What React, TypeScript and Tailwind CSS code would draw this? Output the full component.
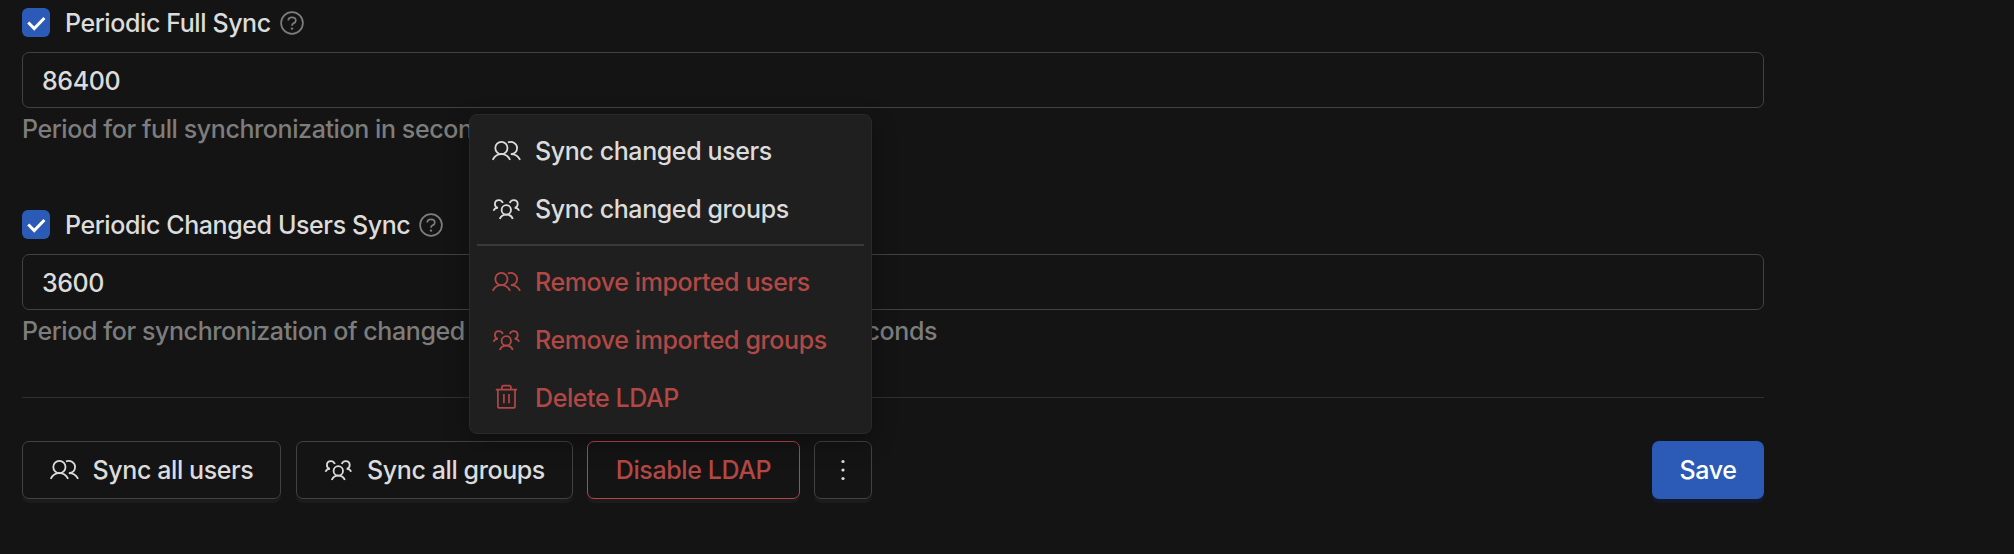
import React from "react";

function UsersIcon() {
  return (
    <svg width="30" height="28" viewBox="0 0 30 28" fill="none" stroke="currentColor" strokeWidth="1.8">
      <circle cx="9.400" cy="11" r="6.100" />
      <path d="M0.700 22.900C2.500 19.300 5.300 17.200 9.400 17.200S16.300 19.300 18.100 22.900" />
      <path d="M15.900 5.400c4.800-1.700 9.200 1.500 9.200 5.700 0 3.400-2.500 5.900-6.300 6 4.600 0 7.600 2.300 9.300 5.700" />
    </svg>
  );
}

function GroupsIcon() {
  return (
    <svg width="30" height="28" viewBox="0 0 30 28" fill="none" stroke="currentColor" strokeWidth="1.8">
      <circle cx="14.300" cy="14.900" r="4.700" />
      <path d="M7.800 24c1-2.900 3.100-4.400 6.500-4.400s5.500 1.500 6.500 4.400" />
      <path d="M10.800 8C10.200 6.100 8.800 5.100 7 5.100 4.600 5.100 2.900 6.800 2.900 9c0 1.900 1.200 3.400 3 3.800C3.600 12.800 2.200 13.800 1.500 15.700" />
      <path d="M17.800 8c.6-1.900 2-2.900 3.800-2.900 2.400 0 4.100 1.700 4.100 3.900 0 1.900-1.200 3.400-3 3.800 2.300 0 3.700 1 4.400 2.900" />
    </svg>
  );
}

function TrashIcon() {
  return (
    <svg width="30" height="28" viewBox="0 0 30 28" fill="none" stroke="currentColor" strokeWidth="1.700">
      <path d="M3.800 5.700H25M5.900 5.700V22.700q0 1.100 1.100 1.100H21.900q1.100 0 1.100-1.100V5.700M9.900 5.500V3.500q0-1.800 1.800-1.800h5.400q1.800 0 1.800 1.800v2M11.900 9.900v9.300M17 9.900v9.300" />
    </svg>
  );
}

function HelpIcon() {
  return (
    <svg width="24" height="24" viewBox="0 0 24 24" fill="none" stroke="#7d7d7d" strokeWidth="1.700" className="mt-px ml-[9px]">
      <circle cx="12" cy="12" r="10.900" />
      <path d="M8.300 9.600C8.300 7.500 9.900 6.300 12 6.300s3.800 1.300 3.800 3.200c0 1.500-1.100 2.400-2.300 2.900-1 .4-1.500 1-1.500 2.400" />
      <circle cx="12" cy="17.600" r="1.200" fill="#7d7d7d" stroke="none" />
    </svg>
  );
}

function Field({ label, value, help }: { label: string; value: string; help: string }) {
  return (
    <section className="h-[202px]">
      <div className="flex h-[29px] items-center">
        <span className="flex h-[29px] w-7 items-center justify-center rounded-md bg-[#2b5ab7]">
          <svg width="28" height="29" viewBox="0 0 28 29" fill="none" stroke="white" strokeWidth="3">
            <path d="M6.300 14.500L12.200 20.500L22.400 10" />
          </svg>
        </span>
        <span className="ml-[15px] pt-0.5">{label}</span>
        <HelpIcon />
      </div>
      <div className="mt-[15px] flex h-14 items-center rounded-[7px] border border-[#424242] pt-[3px] pl-[19px]">{value}</div>
      <p className="mt-[3px] leading-9 text-[#7d7d7d]">{help}</p>
    </section>
  );
}

function MenuItem({ icon, children, danger = false }: { icon: React.ReactNode; children: React.ReactNode; danger?: boolean }) {
  return (
    <li className={`flex h-[58px] items-center gap-[13px] pl-[22px] ${danger ? "text-[#b14845]" : ""}`}>
      {icon}
      <span className="pt-0.5">{children}</span>
    </li>
  );
}

const button = "flex h-[58px] items-center justify-center rounded-[7px] border border-[#424242] shadow-[0_4px_0_#1c1c1c]";

export default function App() {
  return (
    <main className="h-[554px] w-full overflow-hidden bg-[#141414] pl-[22px] pt-2 font-['Inter','Liberation_Sans',sans-serif] text-[25px] font-[450] tracking-[-0.4px] whitespace-nowrap text-[#dcdcdc]">
      <div className="w-[1742px]">
        <Field label="Periodic Full Sync" value="86400" help="Period for full synchronization in seconds" />
        <Field label="Periodic Changed Users Sync" value="3600" help="Period for synchronization of changed or newly created LDAP users in seconds" />
        <div className="-mt-[15px] border-t border-[#303030]" />
        <div className="mt-[43px] flex justify-between">
          <div className="flex">
            <button className={`${button} w-[259px] gap-[13px]`}><UsersIcon /><span className="pt-0.5">Sync all users</span></button>
            <button className={`${button} ml-[15px] w-[277px] gap-[13px]`}><GroupsIcon /><span className="pt-0.5">Sync all groups</span></button>
            <button className="ml-[14px] flex h-[58px] w-[213px] items-center justify-center rounded-[7px] border border-[#b14845] pt-0.5 text-[#b14845] shadow-[0_4px_0_#1c1c1c]">Disable LDAP</button>
            <div className="relative ml-[14px]">
              <button aria-label="More actions" className={`${button} w-[58px]`}>
                <svg width="24" height="24" viewBox="0 0 24 24" fill="currentColor">
                  <circle cx="12" cy="3.500" r="1.600" />
                  <circle cx="12" cy="12" r="1.600" />
                  <circle cx="12" cy="20.500" r="1.600" />
                </svg>
              </button>
              <ul className="absolute right-0 bottom-[65px] h-[320px] w-[403px] rounded-[8px] border border-[#2a2a2a] bg-[#1f1f1f] py-[7px] shadow-[0_8px_24px_rgba(0,0,0,0.32)]">
                <MenuItem icon={<UsersIcon />}>Sync changed users</MenuItem>
                <MenuItem icon={<GroupsIcon />}>Sync changed groups</MenuItem>
                <li className="mx-[7px] mt-[6px] mb-[7px] h-[2px] bg-[#393939]" />
                <MenuItem danger icon={<UsersIcon />}>Remove imported users</MenuItem>
                <MenuItem danger icon={<GroupsIcon />}>Remove imported groups</MenuItem>
                <MenuItem danger icon={<TrashIcon />}>Delete LDAP</MenuItem>
              </ul>
            </div>
          </div>
          <button className="flex h-[58px] w-28 items-center justify-center rounded-[7px] bg-[#2b5ab7] pt-0.5 text-white shadow-[0_4px_0_#121a2c]">Save</button>
        </div>
      </div>
    </main>
  );
}
